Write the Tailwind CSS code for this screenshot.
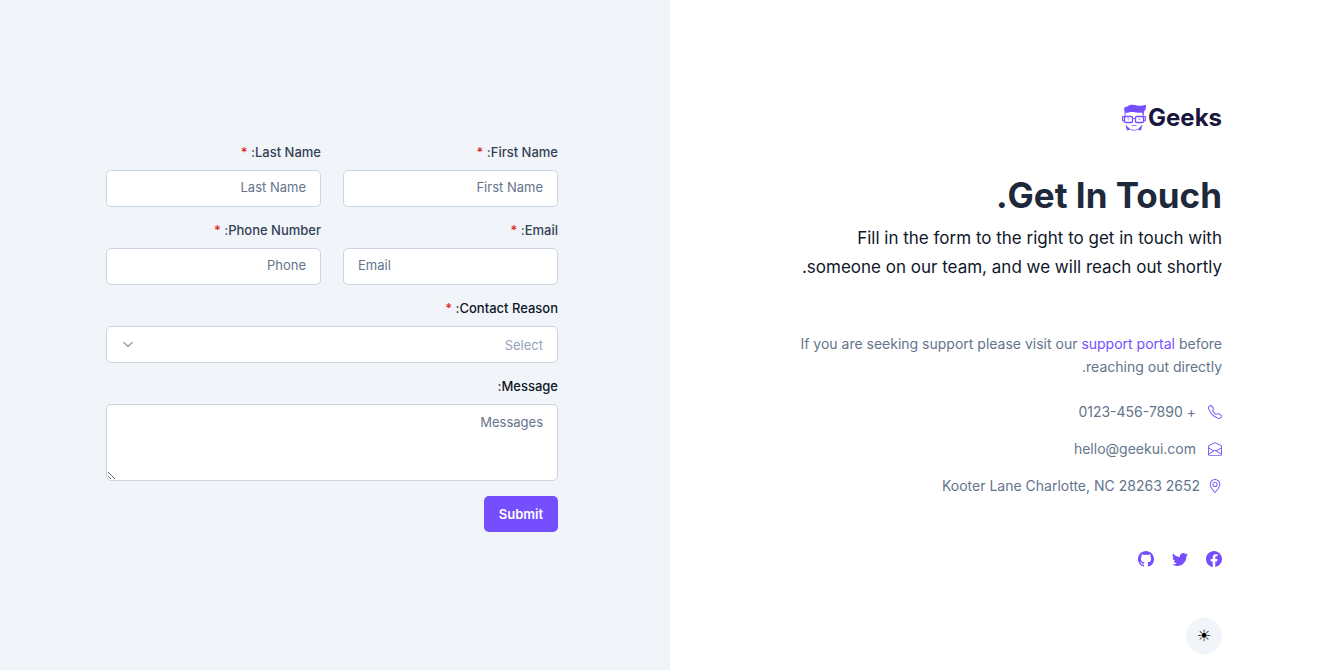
<!DOCTYPE html>
<html lang="en" dir="rtl">
<head>
<meta charset="utf-8">
<meta name="viewport" content="width=device-width, initial-scale=1">
<title>Geeks – Contact</title>
<script src="https://cdn.jsdelivr.net/npm/@tailwindcss/browser@4"></script>
</head>
<body class="bg-white font-['Inter',sans-serif] text-[#64748b]">
<main class="grid min-h-screen md:grid-cols-[673fr_670fr]">

  <section class="flex flex-col px-8 pt-[104px] pb-4 md:pr-[121px] md:pl-[114px]">
    <a href="#" dir="ltr" class="flex items-center gap-[2px] self-start text-[#19163f]" aria-label="Geeks home">
      <svg class="h-7 w-6" viewBox="0 0 24 28" fill="none" stroke="#754ffe" aria-hidden="true">
        <path fill="#754ffe" stroke="none" d="M4 9C1.200 6.500 1.300 2.400 5.500 2.400 8.500.2 12 .8 15 1.400c3 .5 5.500.4 8.800-.6 .6 2.900-.2 5.600-2.400 7.100l-.4 2.600-1.600-2.100c-2.800.6-5 .2-8-.4-2.800-.4-5 .6-7.400 1z"/>
        <path stroke-width="1" d="M3 7.500v5M21.300 7.500v5"/>
        <rect x="2.500" y="12.500" width="8" height="6" rx="1.200" stroke-width="1.300"/>
        <rect x="13.500" y="12.500" width="8" height="6" rx="1.200" stroke-width="1.300"/>
        <path stroke-width="1.200" d="M10.500 14.500h3M2.500 12.500H.7v4l1.800 1M21.500 12.500h1.800v4l-1.800 1"/>
        <path stroke-width=".8" d="M5.500 15h2M16.500 15h2"/>
        <path fill="#754ffe" stroke="none" d="M3.500 20.500 8.500 25.500 5 26.500zM20.500 20.500 15.500 25.500 19 26.500z"/>
        <path stroke-width=".8" stroke-linecap="round" d="M10 21.500h4M8.500 25.700q3.500 1.500 7 0"/>
      </svg>
      <span class="text-2xl leading-7 font-bold">Geeks</span>
    </a>

    <h1 class="mt-[38px] text-[35px] leading-[50px] font-bold text-[#1e293b]">Get In Touch.</h1>
    <p class="mt-1 text-[17px] leading-[29px] text-[#0f172a]">Fill in the form to the right to get in touch with someone on our team, and we will reach out shortly.</p>

    <div class="mt-[50px] text-sm leading-[23px]">
      <p>If you are seeking support please visit our <a href="#" class="text-[#754ffe]">support portal</a> before reaching out directly.</p>
      <address class="mt-[22px] flex flex-col gap-[14px] not-italic">
        <p class="flex items-center gap-3">
          <svg class="size-[14px] fill-[#754ffe]" viewBox="0 0 16 16" aria-hidden="true"><path d="M3.654 1.328a.678.678 0 0 0-1.015-.063L1.605 2.300c-.483.484-.661 1.169-.45 1.770a17.568 17.568 0 0 0 4.168 6.608 17.569 17.569 0 0 0 6.608 4.168c.601.211 1.286.033 1.770-.45l1.034-1.034a.678.678 0 0 0-.063-1.015l-2.307-1.794a.678.678 0 0 0-.58-.122l-2.190.547a1.745 1.745 0 0 1-1.657-.459L5.482 8.062a1.745 1.745 0 0 1-.46-1.657l.548-2.190a.678.678 0 0 0-.122-.58L3.654 1.328zM1.884.511a1.745 1.745 0 0 1 2.612.163L6.290 2.980c.329.423.445.974.315 1.494l-.547 2.190a.678.678 0 0 0 .178.643l2.457 2.457a.678.678 0 0 0 .644.178l2.189-.547a1.745 1.745 0 0 1 1.494.315l2.306 1.794c.829.645.905 1.870.163 2.611l-1.034 1.034c-.74.740-1.846 1.065-2.877.702a18.634 18.634 0 0 1-7.010-4.420 18.634 18.634 0 0 1-4.420-7.009c-.362-1.030-.037-2.137.703-2.877L1.885.511z"/></svg>
          <span>+ 0123-456-7890</span>
        </p>
        <p class="flex items-center gap-3">
          <svg class="size-[14px] fill-[#754ffe]" viewBox="0 0 16 16" aria-hidden="true"><path d="M8.470 1.318a1 1 0 0 0-.940 0l-6 3.200A1 1 0 0 0 1 5.400v.817l5.750 3.450L8 8.917l1.250.750L15 6.217V5.400a1 1 0 0 0-.530-.882l-6-3.200ZM15 7.383l-4.778 2.867L15 13.117V7.383Zm-.035 6.880L8 10.082l-6.965 4.180A1 1 0 0 0 2 15h12a1 1 0 0 0 .965-.738ZM1 13.116l4.778-2.867L1 7.383v5.734ZM7.059.435a2 2 0 0 1 1.882 0l6 3.200A2 2 0 0 1 16 5.400V14a2 2 0 0 1-2 2H2a2 2 0 0 1-2-2V5.400a2 2 0 0 1 1.059-1.765l6-3.200Z"/></svg>
          <span>hello@geekui.com</span>
        </p>
        <p class="flex items-center gap-2">
          <svg class="size-[14px] fill-[#754ffe]" viewBox="0 0 16 16" aria-hidden="true"><path d="M12.166 8.940c-.524 1.062-1.234 2.120-1.960 3.070A31.493 31.493 0 0 1 8 14.580a31.481 31.481 0 0 1-2.206-2.570c-.726-.950-1.436-2.008-1.960-3.070C3.304 7.867 3 6.862 3 6a5 5 0 0 1 10 0c0 .862-.305 1.867-.834 2.940zM8 16s6-5.686 6-10A6 6 0 0 0 2 6c0 4.314 6 10 6 10z"/><path d="M8 8a2 2 0 1 1 0-4 2 2 0 0 1 0 4zm0 1a3 3 0 1 0 0-6 3 3 0 0 0 0 6z"/></svg>
          <span>2652 Kooter Lane Charlotte, NC 28263</span>
        </p>
      </address>
    </div>

    <nav class="mt-[54px] flex gap-[18px]" aria-label="Social">
      <a href="#" aria-label="Facebook"><svg class="size-4 fill-[#754ffe]" viewBox="0 0 16 16"><path d="M16 8.049c0-4.446-3.582-8.050-8-8.050C3.580 0-.002 3.603-.002 8.050c0 4.017 2.926 7.347 6.750 7.951v-5.625h-2.030V8.050H6.750V6.275c0-2.017 1.195-3.131 3.022-3.131.876 0 1.791.157 1.791.157v1.980h-1.009c-.993 0-1.303.621-1.303 1.258v1.510h2.218l-.354 2.326H9.250V16c3.824-.604 6.750-3.934 6.750-7.951z"/></svg></a>
      <a href="#" aria-label="Twitter"><svg class="size-4 fill-[#754ffe]" viewBox="0 0 16 16"><path d="M5.026 15c6.038 0 9.341-5.003 9.341-9.334 0-.140 0-.282-.006-.422A6.685 6.685 0 0 0 16 3.542a6.658 6.658 0 0 1-1.889.518 3.301 3.301 0 0 0 1.447-1.817 6.533 6.533 0 0 1-2.087.793A3.286 3.286 0 0 0 7.875 6.030a9.325 9.325 0 0 1-6.767-3.429 3.289 3.289 0 0 0 1.018 4.382A3.323 3.323 0 0 1 .640 6.575v.045a3.288 3.288 0 0 0 2.632 3.218 3.203 3.203 0 0 1-.865.115 3.230 3.230 0 0 1-.614-.057 3.283 3.283 0 0 0 3.067 2.277A6.588 6.588 0 0 1 .780 13.580a6.320 6.320 0 0 1-.780-.045A9.344 9.344 0 0 0 5.026 15z"/></svg></a>
      <a href="#" aria-label="GitHub"><svg class="size-4 fill-[#754ffe]" viewBox="0 0 16 16"><path d="M8 0C3.580 0 0 3.580 0 8c0 3.540 2.290 6.530 5.470 7.590.4.070.55-.170.55-.380 0-.190-.010-.820-.010-1.490-2.010.370-2.530-.490-2.690-.940-.090-.230-.480-.940-.820-1.130-.280-.150-.680-.520-.010-.530.630-.010 1.080.580 1.230.820.720 1.210 1.870.870 2.330.660.070-.520.280-.870.510-1.070-1.780-.200-3.640-.890-3.640-3.950 0-.870.310-1.590.820-2.150-.080-.200-.360-1.020.080-2.120 0 0 .670-.210 2.200.820.640-.180 1.320-.270 2-.270.680 0 1.360.090 2 .270 1.530-1.040 2.200-.820 2.200-.820.440 1.100.160 1.920.080 2.120.510.560.820 1.270.820 2.150 0 3.070-1.870 3.750-3.650 3.950.290.250.540.730.540 1.480 0 1.070-.010 1.930-.010 2.200 0 .210.150.460.550.380A8.012 8.012 0 0 0 16 8c0-4.420-3.580-8-8-8z"/></svg></a>
    </nav>

    <button type="button" aria-label="Toggle theme" class="mt-[51px] flex size-9 items-center justify-center rounded-full bg-[#f1f5f9] font-['DejaVu_Sans',sans-serif] text-base leading-none text-black">☀</button>
  </section>

  <section class="flex flex-col justify-center bg-[#f1f5f9] px-8 pt-11 pb-10 md:pr-28 md:pl-[106px]">
    <form class="grid grid-cols-2 gap-x-[22px] gap-y-[13px] text-[13px] leading-5 text-[#334155]">
      <div class="flex flex-col gap-2">
        <label for="fname" class="font-medium">First Name: <span class="text-[#dc2626]">*</span></label>
        <input id="fname" type="text" placeholder="First Name" required class="h-[37px] w-full rounded-[5px] border border-[#cbd5e1] bg-white px-[14px] pb-1 placeholder:text-[#64748b]">
      </div>
      <div class="flex flex-col gap-2">
        <label for="lname" class="font-medium">Last Name: <span class="text-[#dc2626]">*</span></label>
        <input id="lname" type="text" placeholder="Last Name" required class="h-[37px] w-full rounded-[5px] border border-[#cbd5e1] bg-white px-[14px] pb-1 placeholder:text-[#64748b]">
      </div>
      <div class="flex flex-col gap-2">
        <label for="email" class="font-medium">Email: <span class="text-[#dc2626]">*</span></label>
        <input id="email" type="email" dir="ltr" placeholder="Email" required class="h-[37px] w-full rounded-[5px] border border-[#cbd5e1] bg-white px-[14px] pb-1 placeholder:text-[#64748b]">
      </div>
      <div class="flex flex-col gap-2">
        <label for="phone" class="font-medium">Phone Number: <span class="text-[#dc2626]">*</span></label>
        <input id="phone" type="text" placeholder="Phone" required class="h-[37px] w-full rounded-[5px] border border-[#cbd5e1] bg-white px-[14px] pb-1 placeholder:text-[#64748b]">
      </div>
      <div class="col-span-2 flex flex-col gap-2">
        <label for="reason" class="font-medium text-[#0f172a]">Contact Reason: <span class="text-[#dc2626]">*</span></label>
        <div class="relative">
          <select id="reason" class="block h-[37px] w-full appearance-none rounded-[5px] border border-[#cbd5e1] bg-white px-[14px] text-[#94a3b8]">
            <option>Select</option>
            <option>Design</option>
            <option>Development</option>
            <option>Other</option>
          </select>
          <svg class="pointer-events-none absolute top-3 left-4 size-3" viewBox="0 0 12 12" fill="none" stroke="#94a3b8" stroke-width="1.500" stroke-linecap="round" stroke-linejoin="round" aria-hidden="true"><path d="M1.800 4.500 6 8.500l4.200-4"/></svg>
        </div>
      </div>
      <div class="col-span-2 flex flex-col gap-2">
        <label for="message" class="font-medium text-[#0f172a]">Message:</label>
        <textarea id="message" rows="3" placeholder="Messages" class="h-[77px] w-full resize rounded-[5px] border border-[#cbd5e1] bg-white px-[14px] py-[7px] placeholder:text-[#64748b]"></textarea>
      </div>
      <div class="col-span-2 pt-[2px]">
        <button type="submit" class="h-9 rounded-[5px] bg-[#754ffe] px-[15px] font-semibold text-white">Submit</button>
      </div>
    </form>
  </section>
</main>
</body>
</html>
